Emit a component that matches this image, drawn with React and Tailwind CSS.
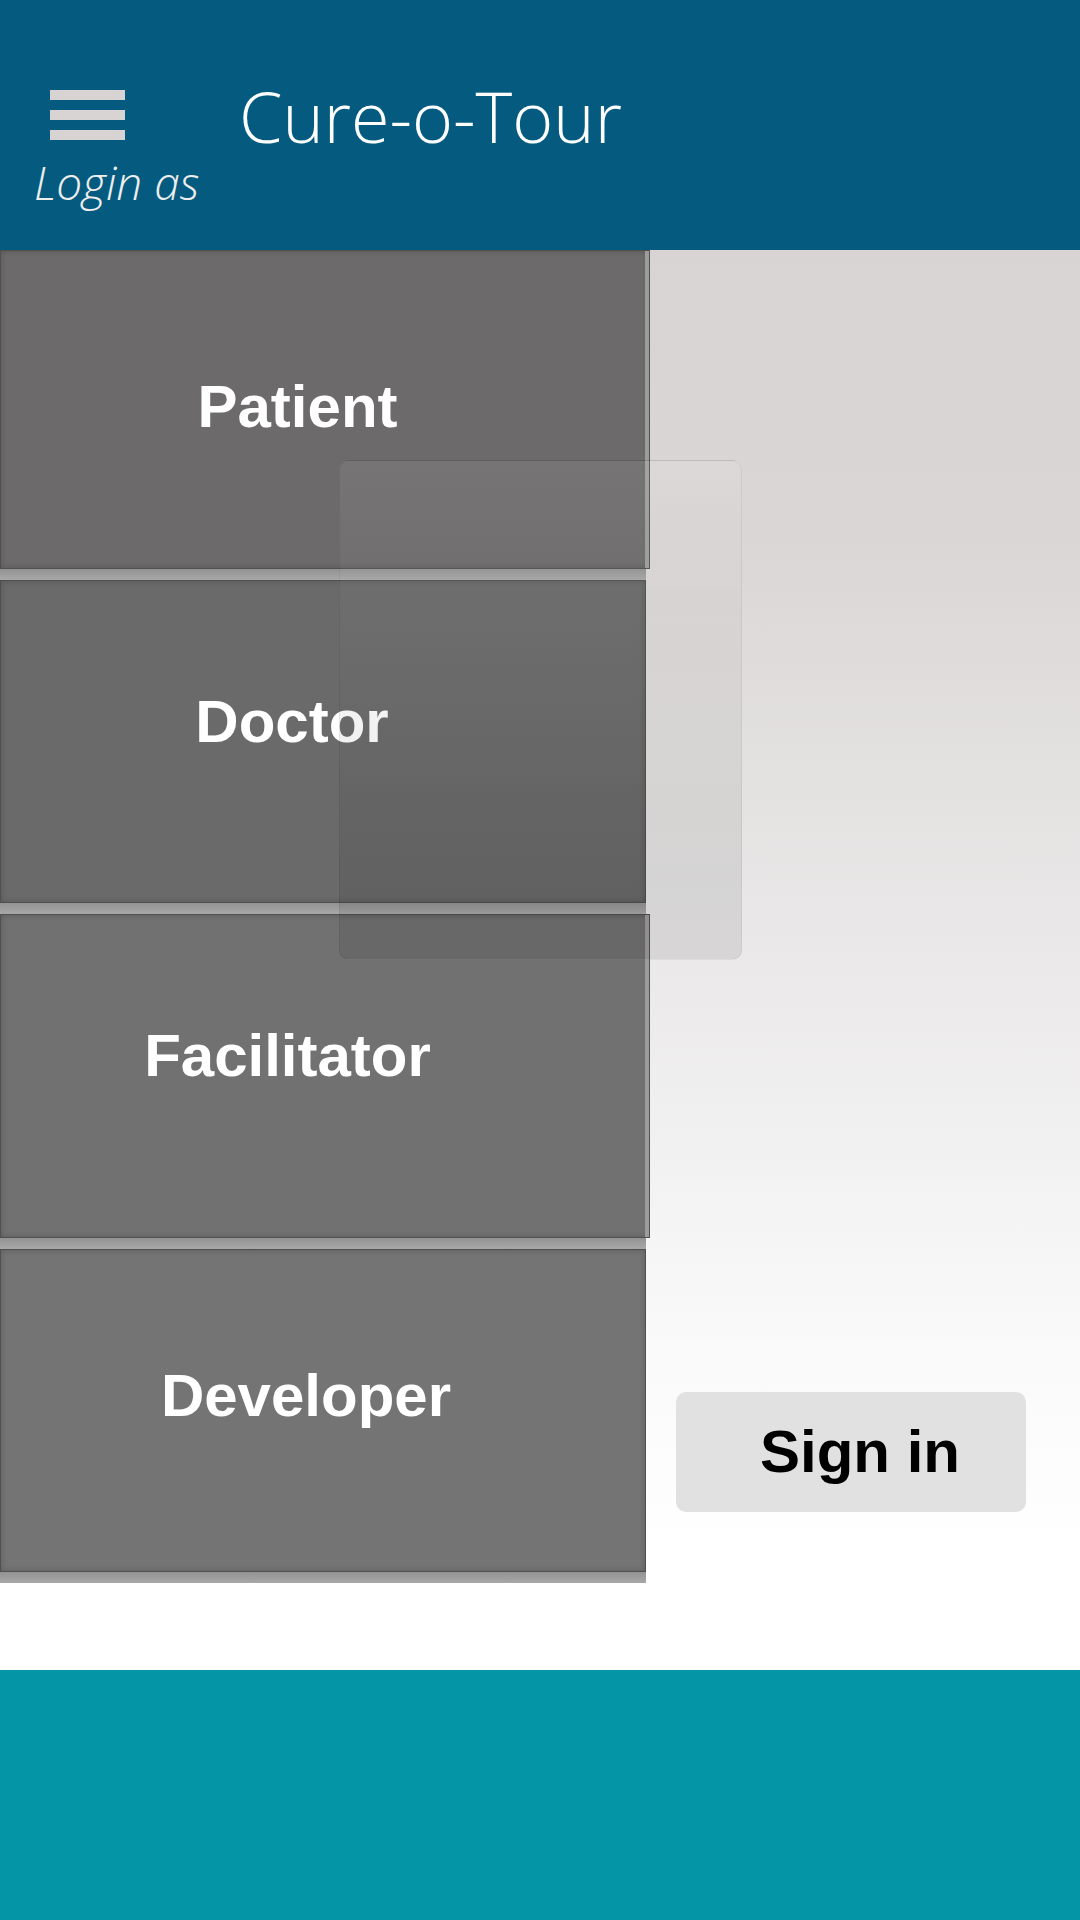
const roles = [
  { label: "Patient", h: "h-[319px]", w: "w-[650px]", pad: "pr-[55px] pb-[5px]", edge: true, bg: "bg-[#6c6a6a]" },
  { label: "Doctor", h: "h-[323px]", w: "w-[646px]", pad: "pr-[62px] pb-[40px]", edge: false, bg: "bg-[#6a6a6a]" },
  { label: "Facilitator", h: "h-[324px]", w: "w-[650px]", pad: "pr-[75px] pb-[40px]", edge: true, bg: "bg-[#717171]" },
  { label: "Developer", h: "h-[323px]", w: "w-[646px]", pad: "pr-[34px] pb-[30px]", edge: false, bg: "bg-[#747474]" },
];

function MenuIcon() {
  return (
    <div className="flex flex-col gap-[10px]">
      <div className="h-[10px] w-[75px] bg-[#d9d4d4]" />
      <div className="h-[10px] w-[75px] bg-[#d9d4d4]" />
      <div className="h-[10px] w-[75px] bg-[#d9d4d4]" />
    </div>
  );
}

function RoleButton({ role }) {
  return (
    <button
      className={`${role.h} ${role.w} ${role.bg} ${role.pad} flex items-center justify-center border border-[#505050] ${
        role.edge
          ? "shadow-[inset_-4px_0_0_#9c9c9c,inset_0_0_6px_rgba(0,0,0,0.2)]"
          : "shadow-[inset_0_0_6px_rgba(0,0,0,0.2)]"
      }`}
    >
      <span className="font-['Liberation_Sans',Arial,sans-serif] text-[60px] font-bold leading-[60px] text-white">
        {role.label}
      </span>
    </button>
  );
}

export default function App() {
  return (
    <div className="flex h-[1920px] w-[1080px] flex-col overflow-hidden font-['Open_Sans',sans-serif]">
      <header className="flex h-[250px] shrink-0 items-start bg-[#045b7f] pl-[34px]">
        <div className="flex w-[205px] flex-col">
          <div className="ml-[16px] mt-[90px]">
            <MenuIcon />
          </div>
          <div className="mt-[19px] text-[46px] font-light italic leading-[46px] text-[#eeeeee]">
            Login as
          </div>
        </div>
        <h1 className="mt-[81px] text-[70px] font-light leading-[70px] text-white">
          Cure-o-Tour
        </h1>
      </header>

      <main className="relative flex flex-1 bg-[linear-gradient(to_bottom,#d9d4d4_0%,#dad6d6_20%,#f9f9f9_76%,#ffffff_92%)]">
        <div className="flex w-[650px] flex-col">
          {roles.map((role) => (
            <div key={role.label} className="flex flex-col">
              <RoleButton role={role} />
              <div className="h-[11px] w-[646px] bg-gradient-to-b from-[#939393] to-[#a8a8a8]" />
            </div>
          ))}
        </div>

        <div className="flex flex-1 flex-col justify-end pb-[158px] pl-[26px]">
          <button className="flex h-[120px] w-[350px] items-center justify-center rounded-[10px] bg-[#e1e1e1] pl-[18px]">
            <span className="font-['Liberation_Sans',Arial,sans-serif] text-[60px] font-bold leading-[60px] text-black">
              Sign in
            </span>
          </button>
        </div>

        <div className="pointer-events-none absolute left-[339px] top-[210px] h-[500px] w-[403px] rounded-[10px] border border-black/[0.06] bg-gradient-to-b from-white/[0.07] to-black/[0.08]" />
      </main>

      <footer className="h-[250px] shrink-0 bg-[#0496a7]" />
    </div>
  );
}
